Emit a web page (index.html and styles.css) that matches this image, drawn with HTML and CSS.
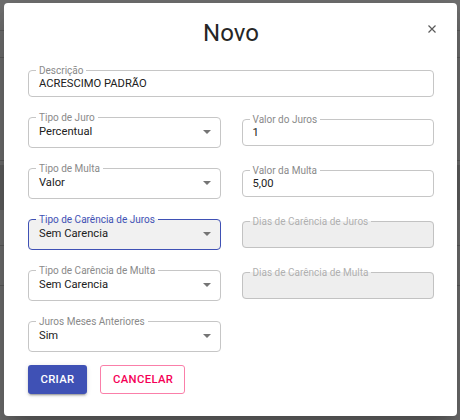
FILE: index.html
```html
<!DOCTYPE html>
<html lang="pt-BR">
<head>
<meta charset="utf-8">
<title>Novo</title>
<link rel="stylesheet" href="styles.css">
</head>
<body>
<div class="dialog">
  <div class="header">
    <h2 class="title">Novo</h2>
    <svg class="close" viewBox="0 0 8 8" width="8" height="8"><path d="M0.5 0.5L7.5 7.5M7.5 0.5L0.5 7.5" stroke="#5a5a5a" stroke-width="1.2" fill="none"/></svg>
  </div>
  <form class="form">
    <fieldset class="field input">
      <legend>Descrição</legend>
      <div class="value">ACRESCIMO PADRÃO</div>
    </fieldset>
    <div class="grid">
      <fieldset class="field select">
        <legend>Tipo de Juro</legend>
        <div class="value"><span>Percentual</span><svg class="arrow" viewBox="0 0 8 4" width="8" height="4"><polygon points="0,0 8,0 4,4"/></svg></div>
      </fieldset>
      <fieldset class="field input">
        <legend>Valor do Juros</legend>
        <div class="value">1</div>
      </fieldset>
      <fieldset class="field select">
        <legend>Tipo de Multa</legend>
        <div class="value"><span>Valor</span><svg class="arrow" viewBox="0 0 8 4" width="8" height="4"><polygon points="0,0 8,0 4,4"/></svg></div>
      </fieldset>
      <fieldset class="field input">
        <legend>Valor da Multa</legend>
        <div class="value">5,00</div>
      </fieldset>
      <fieldset class="field select focused">
        <legend>Tipo de Carência de Juros</legend>
        <div class="value"><span>Sem Carencia</span><svg class="arrow" viewBox="0 0 8 4" width="8" height="4"><polygon points="0,0 8,0 4,4"/></svg></div>
      </fieldset>
      <fieldset class="field input disabled">
        <legend>Dias de Carência de Juros</legend>
        <div class="value">&nbsp;</div>
      </fieldset>
      <fieldset class="field select">
        <legend>Tipo de Carência de Multa</legend>
        <div class="value"><span>Sem Carencia</span><svg class="arrow" viewBox="0 0 8 4" width="8" height="4"><polygon points="0,0 8,0 4,4"/></svg></div>
      </fieldset>
      <fieldset class="field input disabled">
        <legend>Dias de Carência de Multa</legend>
        <div class="value">&nbsp;</div>
      </fieldset>
      <fieldset class="field select">
        <legend>Juros Meses Anteriores</legend>
        <div class="value"><span>Sim</span><svg class="arrow" viewBox="0 0 8 4" width="8" height="4"><polygon points="0,0 8,0 4,4"/></svg></div>
      </fieldset>
    </div>
    <div class="actions">
      <button type="button" class="btn btn-primary">CRIAR</button>
      <button type="button" class="btn btn-outline">CANCELAR</button>
    </div>
  </form>
</div>
</body>
</html>
```
FILE: styles.css
```css
html, body {
  margin: 0;
  height: 420px;
  overflow: hidden;
}
body {
  padding: 3px 3px 0 4px;
  box-sizing: border-box;
  font-family: Roboto, "Liberation Sans", sans-serif;
  background-color: #717171;
  background-image:
    linear-gradient(to bottom, transparent 30px, #5e5e5e 30px, #5e5e5e 31px, transparent 31px),
    linear-gradient(to bottom, transparent 57px, #5e5e5e 57px, #5e5e5e 58px, transparent 58px),
    linear-gradient(to bottom, transparent 160px, #5e5e5e 160px, #5e5e5e 161px, transparent 161px),
    linear-gradient(to bottom, transparent 165px, #626262 165px, #626262 210px, transparent 210px),
    linear-gradient(to bottom, transparent 245px, #5e5e5e 245px, #5e5e5e 246px, transparent 246px),
    linear-gradient(to bottom, transparent 285px, #5e5e5e 285px, #5e5e5e 286px, transparent 286px);
}
.dialog {
  width: 453px;
  height: 413px;
  box-sizing: border-box;
  background: #fff;
  border-radius: 4px;
  padding: 14px 23px 0 24px;
  box-shadow: 0 11px 15px -7px rgba(0,0,0,.2), 0 24px 38px 3px rgba(0,0,0,.14), 0 9px 46px 8px rgba(0,0,0,.12);
}
.header {
  display: grid;
  grid-template-columns: 1fr auto 1fr;
  height: 32px;
}
.title {
  grid-column: 2;
  margin: 0;
  font-size: 24px;
  line-height: 32px;
  font-weight: 400;
  color: #262626;
}
.close {
  grid-column: 3;
  justify-self: end;
  align-self: start;
  margin: 8px -2px 0 0;
}
.form {
  margin: 16px 0 0;
}
.field {
  margin: 0;
  min-width: 0;
  padding: 0 9px 0 7px;
  border: 1px solid #c6c6c6;
  border-radius: 4px;
  box-sizing: border-box;
}
.field legend {
  padding: 0 3px;
  font-size: 10px;
  line-height: 11px;
  color: #8a8a8a;
  white-space: nowrap;
}
.field .value {
  padding-left: 3px;
  font-size: 11.2px;
  line-height: 14px;
  color: #212121;
  white-space: nowrap;
}
.input .value {
  padding-top: 1px;
  padding-bottom: 5px;
}
.select .value {
  padding-top: 2px;
  padding-bottom: 8px;
  display: flex;
  align-items: center;
  justify-content: space-between;
}
.arrow {
  fill: #757575;
}
.focused {
  border-color: #3f51b5;
  background: #f1f1f1;
}
.focused legend {
  color: #3f51b5;
}
.disabled {
  background: #eeeeee;
  border-color: #c2c2c2;
}
.disabled legend {
  color: #b0b0b0;
}
.grid {
  display: grid;
  grid-template-columns: 1fr 1fr;
  column-gap: 21px;
  row-gap: 15px;
  margin-top: 15px;
  align-items: center;
}
.actions {
  display: flex;
  gap: 13px;
  margin-top: 13px;
}
.btn {
  height: 29px;
  padding: 0 12px;
  border-radius: 3px;
  font-family: Roboto, "Liberation Sans", sans-serif;
  font-size: 11.3px;
  font-weight: 500;
  letter-spacing: 0.35px;
  box-sizing: border-box;
  cursor: pointer;
}
.btn-primary {
  width: 59px;
  background: #3f51b5;
  color: #fff;
  border: none;
  box-shadow: 0 3px 1px -2px rgba(0,0,0,.2), 0 2px 2px 0 rgba(0,0,0,.14), 0 1px 5px 0 rgba(0,0,0,.12);
}
.btn-outline {
  width: 85px;
  background: #fff;
  color: #f50057;
  border: 1px solid #fa7fa9;
}
```
